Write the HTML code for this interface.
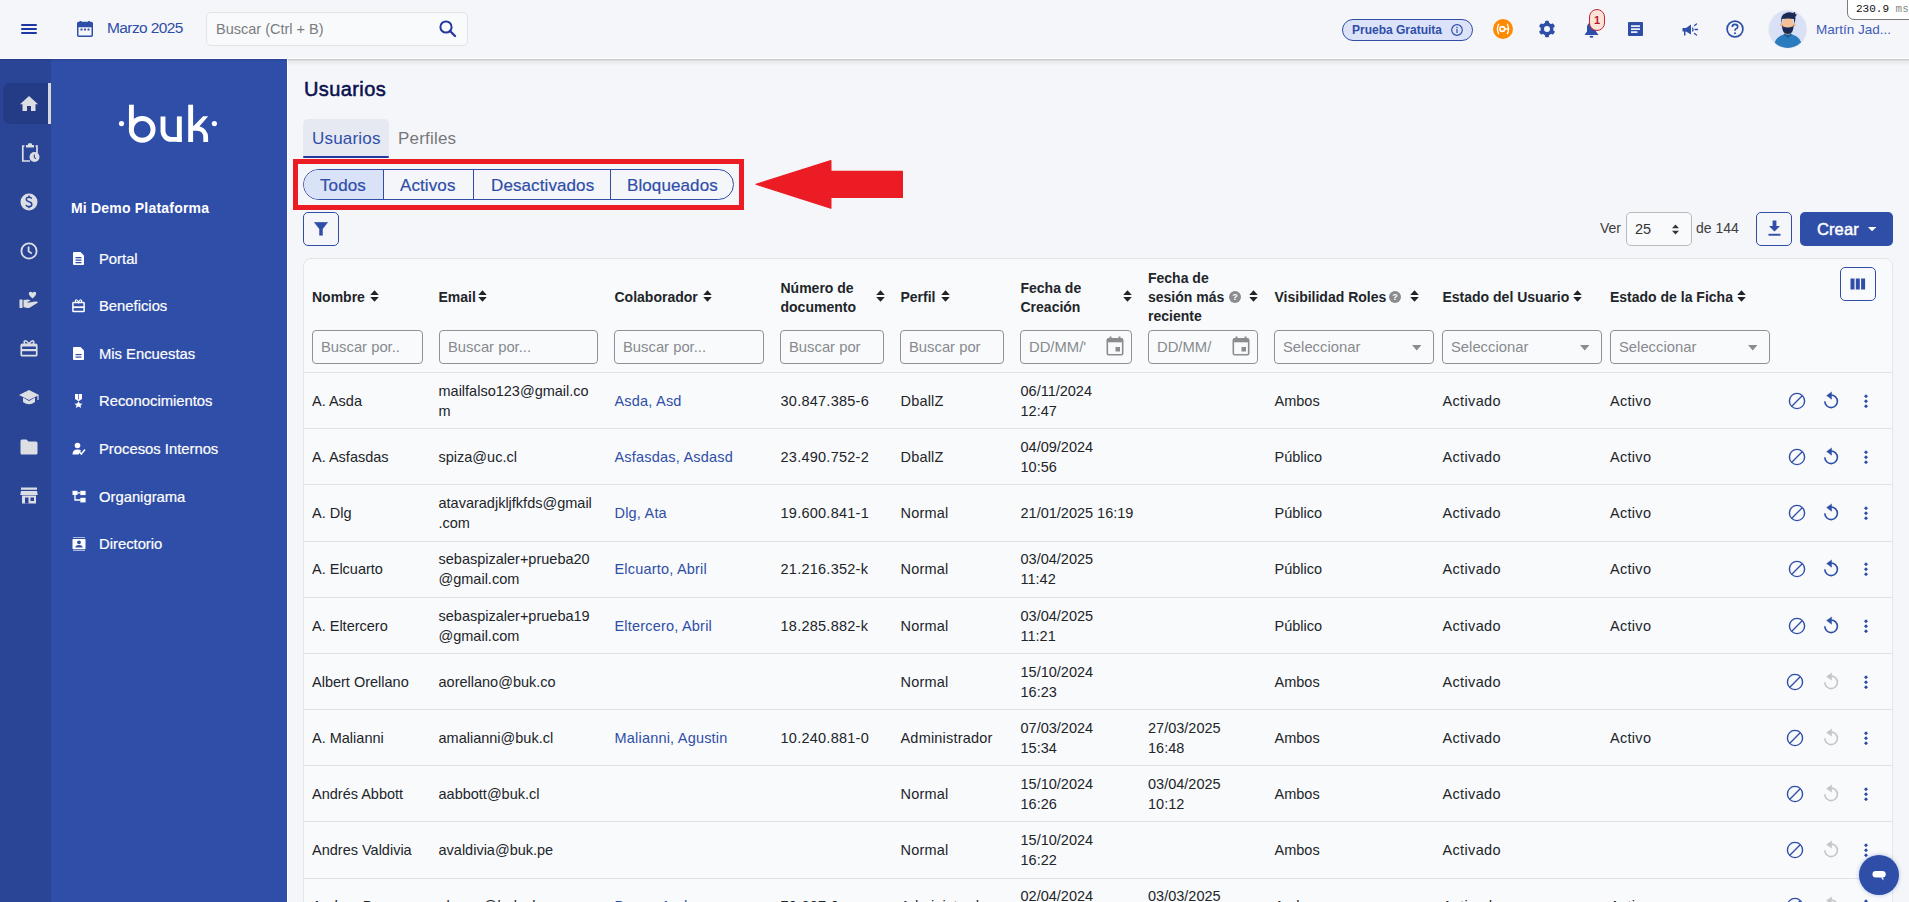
<!DOCTYPE html>
<html><head><meta charset="utf-8">
<style>
*{box-sizing:border-box;margin:0;padding:0}
html,body{width:1909px;height:902px;overflow:hidden;background:#f5f6f9;font-family:"Liberation Sans",sans-serif;color:#212529;position:relative}
.abs{position:absolute}
#top{position:absolute;left:0;top:0;width:1909px;height:58px;background:#f5f6f9}
#topline{position:absolute;left:0;top:58px;width:1909px;height:1px;background:#fff}
#shadow{position:absolute;left:288px;top:59px;width:1621px;height:7px;background:linear-gradient(rgba(0,0,0,.22),rgba(0,0,0,.06) 30%,rgba(0,0,0,0))}
#sshadow{position:absolute;left:0;top:59px;width:287px;height:2px;background:linear-gradient(rgba(0,0,0,.18),rgba(0,0,0,0))}
#rail{position:absolute;left:0;top:59px;width:51px;height:843px;background:#2a4596}
#side{position:absolute;left:51px;top:59px;width:236px;height:843px;background:#2f4ea8}
#sideedge{position:absolute;left:287px;top:59px;width:1px;height:843px;background:#fff}
.mi{position:absolute;left:99px;font-size:14.8px;color:#fff;line-height:20px;-webkit-text-stroke:0.2px #fff}
.mic{position:absolute;left:72px;width:14px;height:14px}
.ri{position:absolute;left:20px;width:18px;height:18px}
#card{position:absolute;left:303px;top:258px;width:1590px;height:700px;background:#f9fafc;border:1px solid #e3e5ea;border-radius:8px}
.hd{position:absolute;font-size:14px;font-weight:bold;color:#212529;line-height:19px}
.sort{position:absolute;width:9px;height:12px}
.inp{position:absolute;top:330px;height:34px;border:1px solid #8f9194;border-radius:4px;background:#f9fafc;font-size:14.8px;color:#878a8e;padding-left:8px;line-height:32px;overflow:hidden;white-space:nowrap}
.row{position:absolute;left:304px;width:1588px;height:1px;background:#e1e3e8}
.rowc{position:absolute;left:304px;width:1587px;height:56px}
.c{position:absolute;top:0;height:56px;display:flex;align-items:center;font-size:14.5px;line-height:20px;color:#212529;white-space:nowrap}
.lk{color:#2f4ea8}
.seg{top:175.8px;font-size:17px;letter-spacing:0.1px;color:#2f4ea8;line-height:19px;white-space:nowrap;-webkit-text-stroke:0.2px #2f4ea8}
</style></head><body>
<div id="top"></div>
<div id="topline"></div>
<div id="rail"></div>
<div id="side"></div>
<div id="sideedge"></div>
<div id="shadow"></div>
<div id="sshadow"></div>


<!-- TOP BAR -->
<svg class="abs" style="left:21px;top:24px" width="16" height="10" viewBox="0 0 16 10"><rect x="0" y="0" width="16" height="2" rx="1" fill="#1f37a0"/><rect x="0" y="4" width="16" height="2" rx="1" fill="#1f37a0"/><rect x="0" y="8" width="16" height="2" rx="1" fill="#1f37a0"/></svg>
<svg class="abs" style="left:77px;top:21px" width="16" height="16" viewBox="0 0 16 16"><rect x="2.5" y="0" width="2" height="2" rx=".5" fill="#2f4ea8"/><rect x="11" y="0" width="2" height="2" rx=".5" fill="#2f4ea8"/><rect x="0.75" y="1.5" width="14.5" height="13.75" rx="1" fill="none" stroke="#2f4ea8" stroke-width="1.5"/><rect x="0.5" y="1.25" width="15" height="5" rx="1" fill="#2f4ea8"/><rect x="3.5" y="7.5" width="2" height="2" rx=".6" fill="#2f4ea8"/><rect x="7" y="7.5" width="2" height="2" rx=".6" fill="#2f4ea8"/><rect x="10.5" y="7.5" width="2" height="2" rx=".6" fill="#2f4ea8"/></svg>
<div class="abs" style="left:107px;top:19px;font-size:15.5px;letter-spacing:-0.6px;color:#2f4ea8;line-height:18px">Marzo 2025</div>
<div class="abs" style="left:206px;top:12px;width:262px;height:34px;border:1px solid #e2e4e8;border-radius:5px;background:#f9fafc"></div>
<div class="abs" style="left:216px;top:20px;font-size:14.5px;color:#7b7d80;line-height:18px">Buscar (Ctrl + B)</div>
<svg class="abs" style="left:439px;top:20px" width="18" height="18" viewBox="0 0 18 18"><circle cx="7" cy="7" r="5.6" fill="none" stroke="#2638a0" stroke-width="2"/><line x1="11" y1="11" x2="16" y2="16" stroke="#2638a0" stroke-width="2.4" stroke-linecap="round"/></svg>

<div class="abs" style="left:1342px;top:19px;width:131px;height:22px;border:1.5px solid #2f4ea8;border-radius:11px;background:#dce3f8"></div>
<div class="abs" style="left:1352px;top:23px;font-size:12px;font-weight:bold;color:#2f4ea8;line-height:15px">Prueba Gratuita</div>
<svg class="abs" style="left:1451px;top:24px" width="12" height="12" viewBox="0 0 12 12"><circle cx="6" cy="6" r="5.3" fill="none" stroke="#2f4ea8" stroke-width="1.2"/><rect x="5.4" y="5" width="1.2" height="4" fill="#2f4ea8"/><circle cx="6" cy="3.4" r=".75" fill="#2f4ea8"/></svg>

<svg class="abs" style="left:1493px;top:19px" width="20" height="20" viewBox="0 0 20 20"><circle cx="10" cy="10" r="10" fill="#ff8a00"/><circle cx="9.3" cy="10" r="2.4" fill="none" stroke="#fff" stroke-width="1.6"/><line x1="11.5" y1="10" x2="15" y2="10" stroke="#fff" stroke-width="1.5"/><path d="M5.8 4.8 Q3 10 5.8 15.2" fill="none" stroke="#fff" stroke-width="1.3"/><path d="M14.2 4.8 Q17 10 14.2 15.2" fill="none" stroke="#fff" stroke-width="1.3"/></svg>

<svg class="abs" style="left:1537px;top:19px" width="20" height="20" viewBox="0 0 20 20"><g fill="#2f4ea8"><circle cx="10" cy="10" r="6.4"/><rect x="8" y="1.8" width="4" height="16.4" rx=".9"/><rect x="8" y="1.8" width="4" height="16.4" rx=".9" transform="rotate(60 10 10)"/><rect x="8" y="1.8" width="4" height="16.4" rx=".9" transform="rotate(120 10 10)"/></g><circle cx="10" cy="10" r="3" fill="#f5f6f9"/></svg>

<svg class="abs" style="left:1584px;top:21px" width="15" height="17" viewBox="0 0 15 17"><path d="M7.5 1.5 C4 1.5 3 4.5 3 7 L3 10.5 L0.5 14 L14.5 14 L12 10.5 L12 7 C12 4.5 11 1.5 7.5 1.5Z" fill="#2f4ea8"/><ellipse cx="7.5" cy="15.8" rx="2" ry="1" fill="#2f4ea8"/></svg>
<div class="abs" style="left:1589px;top:9px;width:16px;height:22px;border:1px solid #c0283a;border-radius:8px;background:#fde4d6;font-size:11px;font-weight:bold;color:#b3182f;text-align:center;line-height:20px">1</div>

<svg class="abs" style="left:1628px;top:22px" width="15" height="14" viewBox="0 0 15 14"><rect x="0" y="0" width="15" height="14" rx="1" fill="#2f4ea8"/><rect x="3" y="3.3" width="9" height="1.6" fill="#fff"/><rect x="3" y="6.3" width="9" height="1.6" fill="#fff"/><rect x="3" y="9.3" width="6.5" height="1.6" fill="#fff"/></svg>

<svg class="abs" style="left:1682px;top:23px" width="18" height="14" viewBox="0 0 18 14"><path d="M0.5 5 L4 5 L9 1.5 L9 11.5 L4 8.5 L3.5 8.5 L3.5 12.5 L2 12.5 L2 8.5 L0.5 8.5Z" fill="#2f4ea8"/><path d="M10.5 4.5 Q11.5 6.5 10.5 8.5" stroke="#2f4ea8" stroke-width="1.2" fill="none"/><line x1="12.5" y1="2.5" x2="14.5" y2="1" stroke="#2f4ea8" stroke-width="1.3" stroke-linecap="round"/><line x1="13" y1="6.5" x2="15.5" y2="6.5" stroke="#2f4ea8" stroke-width="1.3" stroke-linecap="round"/><line x1="12.5" y1="10.5" x2="14.5" y2="12" stroke="#2f4ea8" stroke-width="1.3" stroke-linecap="round"/></svg>

<svg class="abs" style="left:1726px;top:20px" width="18" height="18" viewBox="0 0 18 18"><circle cx="9" cy="9" r="7.9" fill="none" stroke="#2f4ea8" stroke-width="1.7"/><path d="M6.3 7 Q6.3 4.3 9 4.3 Q11.7 4.3 11.7 6.7 Q11.7 8.3 9.8 9 Q9 9.4 9 10.8" fill="none" stroke="#2f4ea8" stroke-width="1.7"/><circle cx="9" cy="13.3" r="1" fill="#2f4ea8"/></svg>

<svg class="abs" style="left:1768px;top:9px" width="40" height="41" viewBox="0 0 40 41"><defs><clipPath id="av"><circle cx="19.7" cy="20.3" r="18.6"/></clipPath></defs><circle cx="19.7" cy="20.3" r="19.5" fill="#e9eaee"/><circle cx="19.7" cy="20.3" r="18.6" fill="#d9e1f7"/><g clip-path="url(#av)"><path d="M5.5 39 Q6 28.5 15.5 25.5 L24.5 25.5 Q34 28.5 34.5 39 L34.5 42 L5.5 42Z" fill="#2b7bbf"/><path d="M15.5 25.5 L19.7 29 L24 25.5 L23 24.5 L16.5 24.5Z" fill="#1f5f99"/><circle cx="13.3" cy="16" r="1.4" fill="#f0b48a"/><circle cx="26.3" cy="16" r="1.4" fill="#f0b48a"/><rect x="17.7" y="21" width="4" height="4.5" fill="#f4c19a"/><ellipse cx="19.8" cy="14.5" rx="5.6" ry="6.8" fill="#f4c19a"/><path d="M14 15.5 Q13.8 25 19.8 25 Q25.8 25 25.6 15.5 L24.6 17.5 Q19.8 19.5 15 17.5Z" fill="#1b2a52"/><path d="M13 15 Q12.5 5.5 17 4.5 Q21 2.5 25 4 L27.5 2.5 L27 5 L29 5.5 L27.5 7.5 Q27.5 11 26.6 15 L25.8 10 Q19.8 9 14 10Z" fill="#1b2a52"/></g></svg>
<div class="abs" style="left:1816px;top:21px;font-size:13.5px;color:#3d5bb8;line-height:17px">Martín Jad...</div>

<div class="abs" style="left:1847px;top:-1px;width:64px;height:21px;border:1px solid #7a7a7a;border-radius:0 0 0 7px;background:#fff"></div>
<div class="abs" style="left:1856px;top:3px;font-family:'Liberation Mono',monospace;font-size:11px;color:#111;line-height:13px;white-space:nowrap">230.9 <span style="color:#888">ms</span></div>


<!-- SIDEBAR -->
<div class="abs" style="left:3px;top:83px;width:45px;height:41px;background:#243c86;border-radius:7px 0 0 7px"></div>
<div class="abs" style="left:48px;top:83px;width:3px;height:41px;background:#d6d7db"></div>
<svg class="abs" style="left:19px;top:95px" width="20" height="18" viewBox="0 0 20 18"><path d="M10 1 L19 9.3 L16.5 9.3 L16.5 16 L12 16 L12 11 L8 11 L8 16 L3.5 16 L3.5 9.3 L1 9.3Z" fill="#dcdee4"/></svg>
<svg class="abs" style="left:20px;top:143px" width="20" height="20" viewBox="0 0 20 20"><path d="M8 2 L8 1 Q8 0.3 9 0.3 L11 0.3 Q12 0.3 12 1 L12 2 L14 2 L14 4.5 L6 4.5 L6 2Z" fill="#dcdee4"/><path d="M4.5 3 L2.8 3 L2.8 18 L10 18 M15.5 3 L17 3 L17 10" fill="none" stroke="#dcdee4" stroke-width="1.7"/><circle cx="14.5" cy="14" r="5" fill="#dcdee4"/><path d="M14.3 11.5 V14.3 L16 15.8" stroke="#2a4596" stroke-width="1.1" fill="none"/></svg>
<svg class="abs" style="left:20px;top:193px" width="18" height="18" viewBox="0 0 18 18"><circle cx="9" cy="9" r="8.5" fill="#dcdee4"/><path d="M11.7 5.8 Q11.3 4.2 9 4.2 Q6.3 4.2 6.3 6.3 Q6.3 8 9 8.7 Q11.8 9.3 11.8 11.4 Q11.8 13.6 9 13.6 Q6.5 13.6 6.1 11.8" fill="none" stroke="#2a4596" stroke-width="1.5"/><line x1="9" y1="2.6" x2="9" y2="4.4" stroke="#2a4596" stroke-width="1.5"/><line x1="9" y1="13.4" x2="9" y2="15.3" stroke="#2a4596" stroke-width="1.5"/></svg>
<svg class="abs" style="left:20px;top:242px" width="18" height="18" viewBox="0 0 18 18"><circle cx="9" cy="9" r="7.6" fill="none" stroke="#dcdee4" stroke-width="1.8"/><path d="M8.6 4.6 V9.4 L11.8 11.6" fill="none" stroke="#dcdee4" stroke-width="1.8"/></svg>
<svg class="abs" style="left:19px;top:291px" width="20" height="18" viewBox="0 0 20 18"><path d="M12.5 1 Q10 0 9.8 2.5 Q9.8 4.5 13.5 7.5 Q17.2 4.5 17.2 2.5 Q17 0 14.5 1 L13.5 1.8Z" fill="#dcdee4"/><rect x="0.5" y="8.5" width="3" height="8.5" fill="#dcdee4"/><path d="M4.5 9 L9 8.5 Q11 8.5 11.5 10 L8.5 10.8 L8.8 11.8 L16 10.5 Q18.5 10 19 11.5 L11 16.5 Q9.5 17.2 8 17 L4.5 16Z" fill="#dcdee4"/></svg>
<svg class="abs" style="left:20px;top:340px" width="18" height="17" viewBox="0 0 18 17"><path d="M5 4 Q3 1 5.5 0.8 Q7 0.8 9 4 Q11 0.8 12.5 0.8 Q15 1 13 4" fill="none" stroke="#dcdee4" stroke-width="1.5"/><rect x="1.3" y="4.3" width="15.4" height="11.4" rx="1" fill="none" stroke="#dcdee4" stroke-width="1.7"/><rect x="1.3" y="9" width="15.4" height="2.2" fill="#dcdee4"/><rect x="1.3" y="4.3" width="15.4" height="2.2" fill="#dcdee4"/></svg>
<svg class="abs" style="left:18px;top:389px" width="22" height="18" viewBox="0 0 22 18"><path d="M11 1 L21 6 L11 11 L1 6Z" fill="#dcdee4"/><path d="M5 8.5 L5 13 Q11 17.5 17 13 L17 8.5 L11 12Z" fill="#dcdee4"/><line x1="20" y1="6" x2="20" y2="11" stroke="#dcdee4" stroke-width="1.2"/></svg>
<svg class="abs" style="left:20px;top:439px" width="18" height="16" viewBox="0 0 18 16"><path d="M0.5 2 Q0.5 0.5 2 0.5 L6.5 0.5 L8.5 2.5 L16 2.5 Q17.5 2.5 17.5 4 L17.5 14 Q17.5 15.5 16 15.5 L2 15.5 Q0.5 15.5 0.5 14Z" fill="#dcdee4"/></svg>
<svg class="abs" style="left:20px;top:487px" width="18" height="17" viewBox="0 0 18 17"><rect x="1" y="0.5" width="16" height="2.3" fill="#dcdee4"/><path d="M1 4 L17 4 L17.8 8 L0.2 8Z" fill="#dcdee4"/><rect x="2" y="8.5" width="14" height="8" fill="#dcdee4"/><rect x="5" y="10.5" width="3.5" height="6" fill="#2a4596"/><rect x="10.5" y="10.5" width="3.5" height="3.5" fill="#2a4596"/></svg>

<svg class="abs" style="left:110px;top:95px" width="120" height="55" viewBox="110 95 120 55"><g fill="#fff"><circle cx="121.5" cy="123.6" r="2.6"/><circle cx="214.4" cy="123.6" r="2.6"/></g><g fill="none" stroke="#fff" stroke-width="4.9"><line x1="131.4" y1="104.7" x2="131.4" y2="129.4"/><circle cx="142.2" cy="129.4" r="10.9"/><path d="M163 116.4 V131 A8.4 8.4 0 0 0 171.4 139.4 H181.5"/><line x1="179.35" y1="116.4" x2="179.35" y2="142"/><line x1="190.65" y1="104.7" x2="190.65" y2="142"/></g><path d="M193 126.5 L203.2 116.2 L208.2 116.2 L199.5 126.2 Q208.1 129 208.1 137.5 V142 H203.3 V137.5 Q203.3 131 197 130.8 H193Z" fill="#fff"/></svg>

<div class="abs" style="left:71px;top:199.5px;font-size:14px;font-weight:bold;color:#fff;line-height:17px;letter-spacing:0.2px">Mi Demo Plataforma</div>
<svg class="abs" style="left:72px;top:251.5px" width="14" height="14" viewBox="0 0 14 14"><path d="M1 1 Q1 0 2 0 L8.5 0 L12 3.5 L12 12 Q12 13 11 13 L2 13 Q1 13 1 12Z" fill="#fff"/><rect x="3.5" y="5" width="6" height="1.3" fill="#2f4ea8"/><rect x="3.5" y="7.5" width="6" height="1.3" fill="#2f4ea8"/><rect x="3.5" y="10" width="6" height="1.3" fill="#2f4ea8"/></svg>
<div class="mi" style="top:247.5px;margin-top:1px">Portal</div>
<svg class="abs" style="left:72px;top:299.0px" width="14" height="14" viewBox="0 0 14 14"><path d="M4 3.5 Q2.5 1 4.3 0.7 Q5.5 0.7 6.5 3.5 Q7.5 0.7 8.7 0.7 Q10.5 1 9 3.5" fill="none" stroke="#fff" stroke-width="1.1"/><rect x="0.9" y="3.6" width="11.2" height="9" rx=".6" fill="none" stroke="#fff" stroke-width="1.5"/><rect x="0.9" y="7.3" width="11.2" height="1.8" fill="#fff"/></svg>
<div class="mi" style="top:295.0px;margin-top:1px">Beneficios</div>
<svg class="abs" style="left:72px;top:346.5px" width="14" height="14" viewBox="0 0 14 14"><path d="M1 1 Q1 0 2 0 L8.5 0 L12 3.5 L12 12 Q12 13 11 13 L2 13 Q1 13 1 12Z" fill="#fff"/><rect x="3.5" y="7" width="6" height="1.2" fill="#2f4ea8"/><rect x="3.5" y="9.5" width="6" height="1.2" fill="#2f4ea8"/></svg>
<div class="mi" style="top:342.5px;margin-top:1px">Mis Encuestas</div>
<svg class="abs" style="left:72px;top:394.0px" width="14" height="14" viewBox="0 0 14 14"><path d="M3 0 H10 V5 L6.5 7.2 L3 5Z" fill="#fff"/><rect x="6" y="0" width="1" height="5.5" fill="#6d84c8"/><path d="M6.5 7.2 L7.8 9.6 L10.5 9.8 L8.5 11.5 L9.2 14 L6.5 12.6 L3.8 14 L4.5 11.5 L2.5 9.8 L5.2 9.6Z" fill="#fff"/></svg>
<div class="mi" style="top:390.0px;margin-top:1px">Reconocimientos</div>
<svg class="abs" style="left:72px;top:442.0px" width="14" height="14" viewBox="0 0 14 14"><circle cx="5.5" cy="3.5" r="2.8" fill="#fff"/><path d="M0.5 12.5 Q0.5 7.5 5.5 7.5 Q8 7.5 9 8.5 L6.5 12.5Z" fill="#fff"/><path d="M7.5 10 L9.3 12 L13 7.5" fill="none" stroke="#fff" stroke-width="1.5"/></svg>
<div class="mi" style="top:438.0px;margin-top:1px">Procesos Internos</div>
<svg class="abs" style="left:72px;top:489.5px" width="14" height="14" viewBox="0 0 14 14"><rect x="0.5" y="0.8" width="5" height="4.2" fill="#fff"/><rect x="8.3" y="0.8" width="5.3" height="4.3" fill="#fff"/><rect x="8.3" y="7.8" width="5.3" height="4.6" fill="#fff"/><path d="M3 4.5 V10 H8.5 M5 2.9 H8.5" fill="none" stroke="#fff" stroke-width="1.3"/></svg>
<div class="mi" style="top:485.5px;margin-top:1px">Organigrama</div>
<svg class="abs" style="left:72px;top:537.0px" width="14" height="14" viewBox="0 0 14 14"><rect x="1" y="-0.5" width="12" height="1.1" fill="#fff"/><rect x="1" y="13.4" width="12" height="1.1" fill="#fff"/><rect x="0.5" y="2" width="13" height="10.2" rx=".8" fill="#fff"/><circle cx="7" cy="5.3" r="1.9" fill="#2f4ea8"/><path d="M3.3 10.6 Q3.3 8 7 8 Q10.7 8 10.7 10.6Z" fill="#2f4ea8"/></svg>
<div class="mi" style="top:533.0px;margin-top:1px">Directorio</div>

<!-- content title -->
<div class="abs" style="left:304px;top:77px;font-size:20px;font-weight:normal;letter-spacing:0.4px;color:#0b1250;line-height:24px;-webkit-text-stroke:0.55px #0b1250">Usuarios</div>
<div class="abs" style="left:303px;top:119px;width:86px;height:39px;background:#e6e9f2;border-radius:5px 5px 0 0"></div>
<div class="abs" style="left:303px;top:156px;width:86px;height:2px;background:#2638a0;border-radius:1px"></div>
<div class="abs" style="left:312px;top:129px;font-size:17px;letter-spacing:0.2px;color:#2f4ea8;line-height:20px">Usuarios</div>
<div class="abs" style="left:398px;top:129px;font-size:17px;letter-spacing:0.2px;color:#76787b;line-height:20px">Perfiles</div>

<div id="card"></div>

<!-- SEGMENTS -->
<div class="abs" style="left:293px;top:159px;width:451px;height:51px;border:5px solid #ec1c24"></div>
<div class="abs" style="left:303px;top:169px;width:431px;height:31px;border:1px solid #2f4ea8;border-radius:15.5px;overflow:hidden;background:#f5f6f9">
  <div class="abs" style="left:0;top:0;width:79px;height:29px;background:#dae2f8"></div>
  <div class="abs" style="left:79px;top:0;width:1px;height:29px;background:#2f4ea8"></div>
  <div class="abs" style="left:169px;top:0;width:1px;height:29px;background:#2f4ea8"></div>
  <div class="abs" style="left:306px;top:0;width:1px;height:29px;background:#2f4ea8"></div>
</div>
<div class="abs seg" style="left:320px">Todos</div>
<div class="abs seg" style="left:400px">Activos</div>
<div class="abs seg" style="left:491px">Desactivados</div>
<div class="abs seg" style="left:627px">Bloqueados</div>
<svg class="abs" style="left:750px;top:155px" width="160" height="60" viewBox="750 155 160 60"><path d="M756 184.3 L830.9 160.6 L830.9 171.3 L902.4 171.3 L902.4 197.5 L830.9 197.5 L830.9 208.2Z" fill="#ec1c24" stroke="#ec1c24" stroke-width="1.2" stroke-linejoin="round"/></svg>

<div class="abs" style="left:303px;top:212px;width:36px;height:34px;border:1px solid #2f4ea8;border-radius:5px"></div>
<svg class="abs" style="left:314px;top:222px" width="14" height="14" viewBox="0 0 14 14"><path d="M0.3 0.3 L13.7 0.3 L8.5 7 L8.5 13.3 L5.5 13.3 L5.5 7Z" fill="#2f4ea8" stroke="#2f4ea8" stroke-width=".5" stroke-linejoin="round"/></svg>

<div class="abs" style="left:1600px;top:220px;font-size:14px;color:#3c3c3c;line-height:17px">Ver</div>
<div class="abs" style="left:1626px;top:212px;width:66px;height:34px;border:1px solid #b8babd;border-radius:5px;background:#f9fafc"></div>
<div class="abs" style="left:1635px;top:221px;font-size:14.5px;color:#333;line-height:17px">25</div>
<svg class="abs" style="left:1671px;top:224px" width="9" height="11" viewBox="0 0 9 11"><path d="M4.5 0.5 L8 4.2 L1 4.2Z M1 6.8 L8 6.8 L4.5 10.5Z" fill="#333"/></svg>
<div class="abs" style="left:1696px;top:220px;font-size:14px;color:#3c3c3c;line-height:17px">de 144</div>
<div class="abs" style="left:1756px;top:212px;width:36px;height:34px;border:1px solid #2f4ea8;border-radius:5px"></div>
<svg class="abs" style="left:1768px;top:220px" width="13" height="16" viewBox="0 0 13 16"><path d="M4.6 0.5 H8.4 V6 H12 L6.5 11.5 L1 6 H4.6Z" fill="#2f4ea8"/><rect x="0.5" y="13.8" width="12" height="1.9" fill="#2f4ea8"/></svg>
<div class="abs" style="left:1800px;top:212px;width:93px;height:34px;background:#2f4ea8;border-radius:5px"></div>
<div class="abs" style="left:1817px;top:220.2px;font-size:16.5px;font-weight:normal;letter-spacing:0.1px;color:#fff;line-height:18px;-webkit-text-stroke:0.45px #fff">Crear</div>
<svg class="abs" style="left:1868px;top:226.8px" width="8.2" height="4.3" viewBox="0 0 8.2 4.3"><path d="M0 0 H8.2 L4.1 4.3Z" fill="#fff"/></svg>

<!-- TABLE -->
<div class="hd" style="left:312px;top:288.3px">Nombre</div>
<svg class="abs" style="left:370px;top:289.8px" width="9" height="12" viewBox="0 0 9 12"><path d="M4.5 0.3 L8.8 5 L0.2 5Z M0.2 7 L8.8 7 L4.5 11.7Z" fill="#212529"/></svg>
<div class="hd" style="left:438.5px;top:288.3px">Email</div>
<svg class="abs" style="left:478px;top:289.8px" width="9" height="12" viewBox="0 0 9 12"><path d="M4.5 0.3 L8.8 5 L0.2 5Z M0.2 7 L8.8 7 L4.5 11.7Z" fill="#212529"/></svg>
<div class="hd" style="left:614.5px;top:288.3px">Colaborador</div>
<svg class="abs" style="left:702.5px;top:289.8px" width="9" height="12" viewBox="0 0 9 12"><path d="M4.5 0.3 L8.8 5 L0.2 5Z M0.2 7 L8.8 7 L4.5 11.7Z" fill="#212529"/></svg>
<div class="hd" style="left:780.5px;top:278.8px">Número de<br>documento</div>
<svg class="abs" style="left:875.5px;top:289.8px" width="9" height="12" viewBox="0 0 9 12"><path d="M4.5 0.3 L8.8 5 L0.2 5Z M0.2 7 L8.8 7 L4.5 11.7Z" fill="#212529"/></svg>
<div class="hd" style="left:900.5px;top:288.3px">Perfil</div>
<svg class="abs" style="left:940.5px;top:289.8px" width="9" height="12" viewBox="0 0 9 12"><path d="M4.5 0.3 L8.8 5 L0.2 5Z M0.2 7 L8.8 7 L4.5 11.7Z" fill="#212529"/></svg>
<div class="hd" style="left:1020.5px;top:278.8px">Fecha de<br>Creación</div>
<svg class="abs" style="left:1123px;top:289.8px" width="9" height="12" viewBox="0 0 9 12"><path d="M4.5 0.3 L8.8 5 L0.2 5Z M0.2 7 L8.8 7 L4.5 11.7Z" fill="#212529"/></svg>
<div class="hd" style="left:1148px;top:268.5px">Fecha de<br>sesión más<br>reciente</div>
<svg class="abs" style="left:1228.5px;top:291.2px" width="12" height="12" viewBox="0 0 12 12"><circle cx="6" cy="6" r="6" fill="#8a8c8f"/><text x="6" y="9.2" font-family="Liberation Sans" font-size="9" font-weight="bold" fill="#fff" text-anchor="middle">?</text></svg>
<svg class="abs" style="left:1249px;top:289.8px" width="9" height="12" viewBox="0 0 9 12"><path d="M4.5 0.3 L8.8 5 L0.2 5Z M0.2 7 L8.8 7 L4.5 11.7Z" fill="#212529"/></svg>
<div class="hd" style="left:1274.5px;top:288.3px">Visibilidad Roles</div>
<svg class="abs" style="left:1388.5px;top:291.2px" width="12" height="12" viewBox="0 0 12 12"><circle cx="6" cy="6" r="6" fill="#8a8c8f"/><text x="6" y="9.2" font-family="Liberation Sans" font-size="9" font-weight="bold" fill="#fff" text-anchor="middle">?</text></svg>
<svg class="abs" style="left:1409.5px;top:289.8px" width="9" height="12" viewBox="0 0 9 12"><path d="M4.5 0.3 L8.8 5 L0.2 5Z M0.2 7 L8.8 7 L4.5 11.7Z" fill="#212529"/></svg>
<div class="hd" style="left:1442.5px;top:288.3px">Estado del Usuario</div>
<svg class="abs" style="left:1573px;top:289.8px" width="9" height="12" viewBox="0 0 9 12"><path d="M4.5 0.3 L8.8 5 L0.2 5Z M0.2 7 L8.8 7 L4.5 11.7Z" fill="#212529"/></svg>
<div class="hd" style="left:1610px;top:288.3px">Estado de la Ficha</div>
<svg class="abs" style="left:1736.5px;top:289.8px" width="9" height="12" viewBox="0 0 9 12"><path d="M4.5 0.3 L8.8 5 L0.2 5Z M0.2 7 L8.8 7 L4.5 11.7Z" fill="#212529"/></svg>
<div class="abs" style="left:1840px;top:267px;width:36px;height:34px;border:1px solid #2f4ea8;border-radius:5px"></div>
<svg class="abs" style="left:1850px;top:278px" width="16" height="12" viewBox="0 0 16 12"><rect x="0.5" y="0.5" width="4" height="11" fill="#2f4ea8"/><rect x="5.8" y="0.5" width="4" height="11" fill="#2f4ea8"/><rect x="11.1" y="0.5" width="4" height="11" fill="#2f4ea8"/></svg>
<div class="inp" style="left:312px;width:111px">Buscar por..</div>
<div class="inp" style="left:439px;width:159px">Buscar por...</div>
<div class="inp" style="left:614px;width:150px">Buscar por...</div>
<div class="inp" style="left:780px;width:104px">Buscar por</div>
<div class="inp" style="left:900px;width:104px">Buscar por</div>
<div class="inp" style="left:1020px;width:112px">DD/MM/'</div>
<div class="inp" style="left:1148px;width:110px">DD/MM/</div>
<div class="abs" style="left:1090px;top:332px;width:40px;height:30px;background:#f9fafc"></div>
<div class="abs" style="left:1216px;top:332px;width:40px;height:30px;background:#f9fafc"></div>
<svg class="abs" style="left:1106px;top:336px" width="18" height="20" viewBox="0 0 18 20"><rect x="3.5" y="0.5" width="2" height="3" fill="#8a8c8f"/><rect x="12.5" y="0.5" width="2" height="3" fill="#8a8c8f"/><rect x="1.3" y="2.8" width="15.4" height="15.9" rx="1.5" fill="none" stroke="#8a8c8f" stroke-width="1.6"/><rect x="1.3" y="2.8" width="15.4" height="3.5" fill="#8a8c8f"/><rect x="9.5" y="11" width="4.5" height="4.5" fill="#8a8c8f"/></svg>
<svg class="abs" style="left:1232px;top:336px" width="18" height="20" viewBox="0 0 18 20"><rect x="3.5" y="0.5" width="2" height="3" fill="#8a8c8f"/><rect x="12.5" y="0.5" width="2" height="3" fill="#8a8c8f"/><rect x="1.3" y="2.8" width="15.4" height="15.9" rx="1.5" fill="none" stroke="#8a8c8f" stroke-width="1.6"/><rect x="1.3" y="2.8" width="15.4" height="3.5" fill="#8a8c8f"/><rect x="9.5" y="11" width="4.5" height="4.5" fill="#8a8c8f"/></svg>
<div class="inp" style="left:1274px;width:160px">Seleccionar</div>
<svg class="abs" style="left:1411.5px;top:345px" width="9.5" height="5.5" viewBox="0 0 9.5 5.5"><path d="M0 0 H9.5 L4.75 5.4Z" fill="#8a8c8f"/></svg>
<div class="inp" style="left:1442px;width:160px">Seleccionar</div>
<svg class="abs" style="left:1579.5px;top:345px" width="9.5" height="5.5" viewBox="0 0 9.5 5.5"><path d="M0 0 H9.5 L4.75 5.4Z" fill="#8a8c8f"/></svg>
<div class="inp" style="left:1610px;width:160px">Seleccionar</div>
<svg class="abs" style="left:1747.5px;top:345px" width="9.5" height="5.5" viewBox="0 0 9.5 5.5"><path d="M0 0 H9.5 L4.75 5.4Z" fill="#8a8c8f"/></svg>
<div class="row" style="top:372px"></div>
<div class="rowc" style="top:373px"><div class="c" style="left:8px">A. Asda</div><div class="c" style="left:134.5px">mailfalso123@gmail.co<br>m</div><div class="c" style="left:310.5px;letter-spacing:0.2px"><span class="lk">Asda, Asd</span></div><div class="c" style="left:476.5px;letter-spacing:0.25px">30.847.385-6</div><div class="c" style="left:596.5px;letter-spacing:0.2px">DballZ</div><div class="c" style="left:716.5px">06/11/2024<br>12:47</div><div class="c" style="left:970.5px">Ambos</div><div class="c" style="left:1138.5px;letter-spacing:0.35px">Activado</div><div class="c" style="left:1306px;letter-spacing:0.3px">Activo</div><svg class="abs" style="left:1484px;top:18.5px" width="18" height="18" viewBox="0 0 18 18"><circle cx="9" cy="9" r="7.6" fill="none" stroke="#2f4ea8" stroke-width="1.4"/><line x1="14.2" y1="3.8" x2="3.8" y2="14.2" stroke="#2f4ea8" stroke-width="1.3"/></svg><svg class="abs" style="left:1518.5px;top:18.3px" width="16" height="18" viewBox="0 0 16 18"><path d="M1.8 10.3 A6.3 6.3 0 1 0 8.1 4" fill="none" stroke="#2f4ea8" stroke-width="1.6"/><path d="M3.6 4.6 L8.6 0.9 L8.6 8.3Z" fill="#2f4ea8" stroke="#2f4ea8" stroke-width=".4" stroke-linejoin="round"/></svg><svg class="abs" style="left:1560px;top:18.5px" width="4" height="16" viewBox="0 0 4 16"><path d="M2 2.4 L3.8 4.2 L2 6 L0.2 4.2Z M2 7.4 L3.8 9.2 L2 11 L0.2 9.2Z M2 12.4 L3.8 14.2 L2 16 L0.2 14.2Z" fill="#2f4ea8"/><circle cx="2" cy="4.2" r="1.35" fill="#2f4ea8"/><circle cx="2" cy="9.2" r="1.35" fill="#2f4ea8"/><circle cx="2" cy="14.2" r="1.35" fill="#2f4ea8"/></svg></div>
<div class="row" style="top:428px"></div>
<div class="rowc" style="top:429px"><div class="c" style="left:8px">A. Asfasdas</div><div class="c" style="left:134.5px">spiza@uc.cl</div><div class="c" style="left:310.5px;letter-spacing:0.2px"><span class="lk">Asfasdas, Asdasd</span></div><div class="c" style="left:476.5px;letter-spacing:0.25px">23.490.752-2</div><div class="c" style="left:596.5px;letter-spacing:0.2px">DballZ</div><div class="c" style="left:716.5px">04/09/2024<br>10:56</div><div class="c" style="left:970.5px">Público</div><div class="c" style="left:1138.5px;letter-spacing:0.35px">Activado</div><div class="c" style="left:1306px;letter-spacing:0.3px">Activo</div><svg class="abs" style="left:1484px;top:18.5px" width="18" height="18" viewBox="0 0 18 18"><circle cx="9" cy="9" r="7.6" fill="none" stroke="#2f4ea8" stroke-width="1.4"/><line x1="14.2" y1="3.8" x2="3.8" y2="14.2" stroke="#2f4ea8" stroke-width="1.3"/></svg><svg class="abs" style="left:1518.5px;top:18.3px" width="16" height="18" viewBox="0 0 16 18"><path d="M1.8 10.3 A6.3 6.3 0 1 0 8.1 4" fill="none" stroke="#2f4ea8" stroke-width="1.6"/><path d="M3.6 4.6 L8.6 0.9 L8.6 8.3Z" fill="#2f4ea8" stroke="#2f4ea8" stroke-width=".4" stroke-linejoin="round"/></svg><svg class="abs" style="left:1560px;top:18.5px" width="4" height="16" viewBox="0 0 4 16"><path d="M2 2.4 L3.8 4.2 L2 6 L0.2 4.2Z M2 7.4 L3.8 9.2 L2 11 L0.2 9.2Z M2 12.4 L3.8 14.2 L2 16 L0.2 14.2Z" fill="#2f4ea8"/><circle cx="2" cy="4.2" r="1.35" fill="#2f4ea8"/><circle cx="2" cy="9.2" r="1.35" fill="#2f4ea8"/><circle cx="2" cy="14.2" r="1.35" fill="#2f4ea8"/></svg></div>
<div class="row" style="top:484px"></div>
<div class="rowc" style="top:485px"><div class="c" style="left:8px">A. Dlg</div><div class="c" style="left:134.5px">atavaradjkljfkfds@gmail<br>.com</div><div class="c" style="left:310.5px;letter-spacing:0.2px"><span class="lk">Dlg, Ata</span></div><div class="c" style="left:476.5px;letter-spacing:0.25px">19.600.841-1</div><div class="c" style="left:596.5px;letter-spacing:0.2px">Normal</div><div class="c" style="left:716.5px">21/01/2025 16:19</div><div class="c" style="left:970.5px">Público</div><div class="c" style="left:1138.5px;letter-spacing:0.35px">Activado</div><div class="c" style="left:1306px;letter-spacing:0.3px">Activo</div><svg class="abs" style="left:1484px;top:18.5px" width="18" height="18" viewBox="0 0 18 18"><circle cx="9" cy="9" r="7.6" fill="none" stroke="#2f4ea8" stroke-width="1.4"/><line x1="14.2" y1="3.8" x2="3.8" y2="14.2" stroke="#2f4ea8" stroke-width="1.3"/></svg><svg class="abs" style="left:1518.5px;top:18.3px" width="16" height="18" viewBox="0 0 16 18"><path d="M1.8 10.3 A6.3 6.3 0 1 0 8.1 4" fill="none" stroke="#2f4ea8" stroke-width="1.6"/><path d="M3.6 4.6 L8.6 0.9 L8.6 8.3Z" fill="#2f4ea8" stroke="#2f4ea8" stroke-width=".4" stroke-linejoin="round"/></svg><svg class="abs" style="left:1560px;top:18.5px" width="4" height="16" viewBox="0 0 4 16"><path d="M2 2.4 L3.8 4.2 L2 6 L0.2 4.2Z M2 7.4 L3.8 9.2 L2 11 L0.2 9.2Z M2 12.4 L3.8 14.2 L2 16 L0.2 14.2Z" fill="#2f4ea8"/><circle cx="2" cy="4.2" r="1.35" fill="#2f4ea8"/><circle cx="2" cy="9.2" r="1.35" fill="#2f4ea8"/><circle cx="2" cy="14.2" r="1.35" fill="#2f4ea8"/></svg></div>
<div class="row" style="top:541px"></div>
<div class="rowc" style="top:541px"><div class="c" style="left:8px">A. Elcuarto</div><div class="c" style="left:134.5px">sebaspizaler+prueba20<br>@gmail.com</div><div class="c" style="left:310.5px;letter-spacing:0.2px"><span class="lk">Elcuarto, Abril</span></div><div class="c" style="left:476.5px;letter-spacing:0.25px">21.216.352-k</div><div class="c" style="left:596.5px;letter-spacing:0.2px">Normal</div><div class="c" style="left:716.5px">03/04/2025<br>11:42</div><div class="c" style="left:970.5px">Público</div><div class="c" style="left:1138.5px;letter-spacing:0.35px">Activado</div><div class="c" style="left:1306px;letter-spacing:0.3px">Activo</div><svg class="abs" style="left:1484px;top:18.5px" width="18" height="18" viewBox="0 0 18 18"><circle cx="9" cy="9" r="7.6" fill="none" stroke="#2f4ea8" stroke-width="1.4"/><line x1="14.2" y1="3.8" x2="3.8" y2="14.2" stroke="#2f4ea8" stroke-width="1.3"/></svg><svg class="abs" style="left:1518.5px;top:18.3px" width="16" height="18" viewBox="0 0 16 18"><path d="M1.8 10.3 A6.3 6.3 0 1 0 8.1 4" fill="none" stroke="#2f4ea8" stroke-width="1.6"/><path d="M3.6 4.6 L8.6 0.9 L8.6 8.3Z" fill="#2f4ea8" stroke="#2f4ea8" stroke-width=".4" stroke-linejoin="round"/></svg><svg class="abs" style="left:1560px;top:18.5px" width="4" height="16" viewBox="0 0 4 16"><path d="M2 2.4 L3.8 4.2 L2 6 L0.2 4.2Z M2 7.4 L3.8 9.2 L2 11 L0.2 9.2Z M2 12.4 L3.8 14.2 L2 16 L0.2 14.2Z" fill="#2f4ea8"/><circle cx="2" cy="4.2" r="1.35" fill="#2f4ea8"/><circle cx="2" cy="9.2" r="1.35" fill="#2f4ea8"/><circle cx="2" cy="14.2" r="1.35" fill="#2f4ea8"/></svg></div>
<div class="row" style="top:597px"></div>
<div class="rowc" style="top:598px"><div class="c" style="left:8px">A. Eltercero</div><div class="c" style="left:134.5px">sebaspizaler+prueba19<br>@gmail.com</div><div class="c" style="left:310.5px;letter-spacing:0.2px"><span class="lk">Eltercero, Abril</span></div><div class="c" style="left:476.5px;letter-spacing:0.25px">18.285.882-k</div><div class="c" style="left:596.5px;letter-spacing:0.2px">Normal</div><div class="c" style="left:716.5px">03/04/2025<br>11:21</div><div class="c" style="left:970.5px">Público</div><div class="c" style="left:1138.5px;letter-spacing:0.35px">Activado</div><div class="c" style="left:1306px;letter-spacing:0.3px">Activo</div><svg class="abs" style="left:1484px;top:18.5px" width="18" height="18" viewBox="0 0 18 18"><circle cx="9" cy="9" r="7.6" fill="none" stroke="#2f4ea8" stroke-width="1.4"/><line x1="14.2" y1="3.8" x2="3.8" y2="14.2" stroke="#2f4ea8" stroke-width="1.3"/></svg><svg class="abs" style="left:1518.5px;top:18.3px" width="16" height="18" viewBox="0 0 16 18"><path d="M1.8 10.3 A6.3 6.3 0 1 0 8.1 4" fill="none" stroke="#2f4ea8" stroke-width="1.6"/><path d="M3.6 4.6 L8.6 0.9 L8.6 8.3Z" fill="#2f4ea8" stroke="#2f4ea8" stroke-width=".4" stroke-linejoin="round"/></svg><svg class="abs" style="left:1560px;top:18.5px" width="4" height="16" viewBox="0 0 4 16"><path d="M2 2.4 L3.8 4.2 L2 6 L0.2 4.2Z M2 7.4 L3.8 9.2 L2 11 L0.2 9.2Z M2 12.4 L3.8 14.2 L2 16 L0.2 14.2Z" fill="#2f4ea8"/><circle cx="2" cy="4.2" r="1.35" fill="#2f4ea8"/><circle cx="2" cy="9.2" r="1.35" fill="#2f4ea8"/><circle cx="2" cy="14.2" r="1.35" fill="#2f4ea8"/></svg></div>
<div class="row" style="top:653px"></div>
<div class="rowc" style="top:654px"><div class="c" style="left:8px">Albert Orellano</div><div class="c" style="left:134.5px">aorellano@buk.co</div><div class="c" style="left:596.5px;letter-spacing:0.2px">Normal</div><div class="c" style="left:716.5px">15/10/2024<br>16:23</div><div class="c" style="left:970.5px">Ambos</div><div class="c" style="left:1138.5px;letter-spacing:0.35px">Activado</div><svg class="abs" style="left:1482px;top:18.5px" width="18" height="18" viewBox="0 0 18 18"><circle cx="9" cy="9" r="7.6" fill="none" stroke="#2f4ea8" stroke-width="1.4"/><line x1="14.2" y1="3.8" x2="3.8" y2="14.2" stroke="#2f4ea8" stroke-width="1.3"/></svg><svg class="abs" style="left:1518.5px;top:18.3px" width="16" height="18" viewBox="0 0 16 18"><path d="M1.8 10.3 A6.3 6.3 0 1 0 8.1 4" fill="none" stroke="#c4c6ca" stroke-width="1.6"/><path d="M3.6 4.6 L8.6 0.9 L8.6 8.3Z" fill="#c4c6ca" stroke="#c4c6ca" stroke-width=".4" stroke-linejoin="round"/></svg><svg class="abs" style="left:1560px;top:18.5px" width="4" height="16" viewBox="0 0 4 16"><path d="M2 2.4 L3.8 4.2 L2 6 L0.2 4.2Z M2 7.4 L3.8 9.2 L2 11 L0.2 9.2Z M2 12.4 L3.8 14.2 L2 16 L0.2 14.2Z" fill="#2f4ea8"/><circle cx="2" cy="4.2" r="1.35" fill="#2f4ea8"/><circle cx="2" cy="9.2" r="1.35" fill="#2f4ea8"/><circle cx="2" cy="14.2" r="1.35" fill="#2f4ea8"/></svg></div>
<div class="row" style="top:709px"></div>
<div class="rowc" style="top:710px"><div class="c" style="left:8px">A. Malianni</div><div class="c" style="left:134.5px">amalianni@buk.cl</div><div class="c" style="left:310.5px;letter-spacing:0.2px"><span class="lk">Malianni, Agustin</span></div><div class="c" style="left:476.5px;letter-spacing:0.25px">10.240.881-0</div><div class="c" style="left:596.5px;letter-spacing:0.2px">Administrador</div><div class="c" style="left:716.5px">07/03/2024<br>15:34</div><div class="c" style="left:844px">27/03/2025<br>16:48</div><div class="c" style="left:970.5px">Ambos</div><div class="c" style="left:1138.5px;letter-spacing:0.35px">Activado</div><div class="c" style="left:1306px;letter-spacing:0.3px">Activo</div><svg class="abs" style="left:1482px;top:18.5px" width="18" height="18" viewBox="0 0 18 18"><circle cx="9" cy="9" r="7.6" fill="none" stroke="#2f4ea8" stroke-width="1.4"/><line x1="14.2" y1="3.8" x2="3.8" y2="14.2" stroke="#2f4ea8" stroke-width="1.3"/></svg><svg class="abs" style="left:1518.5px;top:18.3px" width="16" height="18" viewBox="0 0 16 18"><path d="M1.8 10.3 A6.3 6.3 0 1 0 8.1 4" fill="none" stroke="#c4c6ca" stroke-width="1.6"/><path d="M3.6 4.6 L8.6 0.9 L8.6 8.3Z" fill="#c4c6ca" stroke="#c4c6ca" stroke-width=".4" stroke-linejoin="round"/></svg><svg class="abs" style="left:1560px;top:18.5px" width="4" height="16" viewBox="0 0 4 16"><path d="M2 2.4 L3.8 4.2 L2 6 L0.2 4.2Z M2 7.4 L3.8 9.2 L2 11 L0.2 9.2Z M2 12.4 L3.8 14.2 L2 16 L0.2 14.2Z" fill="#2f4ea8"/><circle cx="2" cy="4.2" r="1.35" fill="#2f4ea8"/><circle cx="2" cy="9.2" r="1.35" fill="#2f4ea8"/><circle cx="2" cy="14.2" r="1.35" fill="#2f4ea8"/></svg></div>
<div class="row" style="top:765px"></div>
<div class="rowc" style="top:766px"><div class="c" style="left:8px">Andrés Abbott</div><div class="c" style="left:134.5px">aabbott@buk.cl</div><div class="c" style="left:596.5px;letter-spacing:0.2px">Normal</div><div class="c" style="left:716.5px">15/10/2024<br>16:26</div><div class="c" style="left:844px">03/04/2025<br>10:12</div><div class="c" style="left:970.5px">Ambos</div><div class="c" style="left:1138.5px;letter-spacing:0.35px">Activado</div><svg class="abs" style="left:1482px;top:18.5px" width="18" height="18" viewBox="0 0 18 18"><circle cx="9" cy="9" r="7.6" fill="none" stroke="#2f4ea8" stroke-width="1.4"/><line x1="14.2" y1="3.8" x2="3.8" y2="14.2" stroke="#2f4ea8" stroke-width="1.3"/></svg><svg class="abs" style="left:1518.5px;top:18.3px" width="16" height="18" viewBox="0 0 16 18"><path d="M1.8 10.3 A6.3 6.3 0 1 0 8.1 4" fill="none" stroke="#c4c6ca" stroke-width="1.6"/><path d="M3.6 4.6 L8.6 0.9 L8.6 8.3Z" fill="#c4c6ca" stroke="#c4c6ca" stroke-width=".4" stroke-linejoin="round"/></svg><svg class="abs" style="left:1560px;top:18.5px" width="4" height="16" viewBox="0 0 4 16"><path d="M2 2.4 L3.8 4.2 L2 6 L0.2 4.2Z M2 7.4 L3.8 9.2 L2 11 L0.2 9.2Z M2 12.4 L3.8 14.2 L2 16 L0.2 14.2Z" fill="#2f4ea8"/><circle cx="2" cy="4.2" r="1.35" fill="#2f4ea8"/><circle cx="2" cy="9.2" r="1.35" fill="#2f4ea8"/><circle cx="2" cy="14.2" r="1.35" fill="#2f4ea8"/></svg></div>
<div class="row" style="top:821px"></div>
<div class="rowc" style="top:822px"><div class="c" style="left:8px">Andres Valdivia</div><div class="c" style="left:134.5px">avaldivia@buk.pe</div><div class="c" style="left:596.5px;letter-spacing:0.2px">Normal</div><div class="c" style="left:716.5px">15/10/2024<br>16:22</div><div class="c" style="left:970.5px">Ambos</div><div class="c" style="left:1138.5px;letter-spacing:0.35px">Activado</div><svg class="abs" style="left:1482px;top:18.5px" width="18" height="18" viewBox="0 0 18 18"><circle cx="9" cy="9" r="7.6" fill="none" stroke="#2f4ea8" stroke-width="1.4"/><line x1="14.2" y1="3.8" x2="3.8" y2="14.2" stroke="#2f4ea8" stroke-width="1.3"/></svg><svg class="abs" style="left:1518.5px;top:18.3px" width="16" height="18" viewBox="0 0 16 18"><path d="M1.8 10.3 A6.3 6.3 0 1 0 8.1 4" fill="none" stroke="#c4c6ca" stroke-width="1.6"/><path d="M3.6 4.6 L8.6 0.9 L8.6 8.3Z" fill="#c4c6ca" stroke="#c4c6ca" stroke-width=".4" stroke-linejoin="round"/></svg><svg class="abs" style="left:1560px;top:18.5px" width="4" height="16" viewBox="0 0 4 16"><path d="M2 2.4 L3.8 4.2 L2 6 L0.2 4.2Z M2 7.4 L3.8 9.2 L2 11 L0.2 9.2Z M2 12.4 L3.8 14.2 L2 16 L0.2 14.2Z" fill="#2f4ea8"/><circle cx="2" cy="4.2" r="1.35" fill="#2f4ea8"/><circle cx="2" cy="9.2" r="1.35" fill="#2f4ea8"/><circle cx="2" cy="14.2" r="1.35" fill="#2f4ea8"/></svg></div>
<div class="row" style="top:878px"></div>
<div class="rowc" style="top:878px"><div class="c" style="left:8px">Andrea Bravo</div><div class="c" style="left:134.5px">abravo@buk.cl</div><div class="c" style="left:310.5px;letter-spacing:0.2px"><span class="lk">Bravo, Andrea</span></div><div class="c" style="left:476.5px;letter-spacing:0.25px">70.307.0</div><div class="c" style="left:596.5px;letter-spacing:0.2px">Administrador</div><div class="c" style="left:716.5px">02/04/2024<br>10:11</div><div class="c" style="left:844px">03/03/2025<br>11:05</div><div class="c" style="left:970.5px">Ambos</div><div class="c" style="left:1138.5px;letter-spacing:0.35px">Activado</div><div class="c" style="left:1306px;letter-spacing:0.3px">Activo</div><svg class="abs" style="left:1482px;top:18.5px" width="18" height="18" viewBox="0 0 18 18"><circle cx="9" cy="9" r="7.6" fill="none" stroke="#2f4ea8" stroke-width="1.4"/><line x1="14.2" y1="3.8" x2="3.8" y2="14.2" stroke="#2f4ea8" stroke-width="1.3"/></svg><svg class="abs" style="left:1518.5px;top:18.3px" width="16" height="18" viewBox="0 0 16 18"><path d="M1.8 10.3 A6.3 6.3 0 1 0 8.1 4" fill="none" stroke="#c4c6ca" stroke-width="1.6"/><path d="M3.6 4.6 L8.6 0.9 L8.6 8.3Z" fill="#c4c6ca" stroke="#c4c6ca" stroke-width=".4" stroke-linejoin="round"/></svg><svg class="abs" style="left:1560px;top:18.5px" width="4" height="16" viewBox="0 0 4 16"><path d="M2 2.4 L3.8 4.2 L2 6 L0.2 4.2Z M2 7.4 L3.8 9.2 L2 11 L0.2 9.2Z M2 12.4 L3.8 14.2 L2 16 L0.2 14.2Z" fill="#2f4ea8"/><circle cx="2" cy="4.2" r="1.35" fill="#2f4ea8"/><circle cx="2" cy="9.2" r="1.35" fill="#2f4ea8"/><circle cx="2" cy="14.2" r="1.35" fill="#2f4ea8"/></svg></div>
<div class="abs" style="left:1859px;top:855px;width:40px;height:40px;border-radius:20px;background:#2f4ea8;box-shadow:0 0 4px rgba(47,78,168,.35)"></div>
<svg class="abs" style="left:1870px;top:867px" width="18" height="16" viewBox="0 0 18 16"><rect x="2.5" y="4" width="13.2" height="6.6" rx="3.3" fill="#fff"/><path d="M10.8 10.4 L13.5 13.6 L13.3 10.4Z" fill="#fff"/></svg>
<!-- /TABLE -->
</body></html>
